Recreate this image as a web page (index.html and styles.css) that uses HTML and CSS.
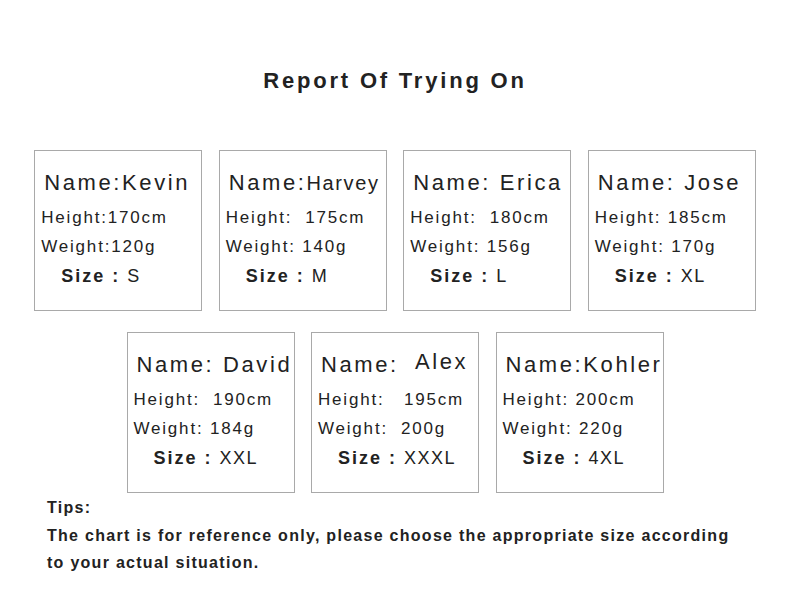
FILE: index.html
```html
<!DOCTYPE html>
<html>
<head>
<meta charset="utf-8">
<link rel="stylesheet" href="styles.css">
</head>
<body>
<div class="page">
  <h1 class="title">Report Of Trying On</h1>
  <div class="row">
    <div class="card">
      <div class="name">Name:Kevin</div>
      <div class="info">Height:170cm</div>
      <div class="info">Weight:120g</div>
      <div class="size"><b>Size : </b>S</div>
    </div>
    <div class="card">
      <div class="name">Name:<span class="small">Harvey</span></div>
      <div class="info">Height:  175cm</div>
      <div class="info">Weight: 140g</div>
      <div class="size"><b>Size : </b>M</div>
    </div>
    <div class="card">
      <div class="name">Name: Erica</div>
      <div class="info">Height:  180cm</div>
      <div class="info">Weight: 156g</div>
      <div class="size"><b>Size : </b>L</div>
    </div>
    <div class="card">
      <div class="name">Name: Jose</div>
      <div class="info">Height: 185cm</div>
      <div class="info">Weight: 170g</div>
      <div class="size"><b>Size : </b>XL</div>
    </div>
  </div>
  <div class="row row2">
    <div class="card">
      <div class="name">Name: David</div>
      <div class="info">Height:  190cm</div>
      <div class="info">Weight: 184g</div>
      <div class="size"><b>Size : </b>XXL</div>
    </div>
    <div class="card">
      <div class="name">Name:  <span class="up">Alex</span></div>
      <div class="info">Height:   195cm</div>
      <div class="info">Weight:  200g</div>
      <div class="size"><b>Size : </b>XXXL</div>
    </div>
    <div class="card">
      <div class="name">Name:Kohler</div>
      <div class="info">Height: 200cm</div>
      <div class="info">Weight: 220g</div>
      <div class="size"><b>Size : </b>4XL</div>
    </div>
  </div>
  <div class="tips">
    <p>Tips:</p>
    <p>The chart is for reference only, please choose the appropriate size according</p>
    <p>to your actual situation.</p>
  </div>
</div>
</body>
</html>
```

FILE: styles.css
```css
html, body {
  margin: 0;
  padding: 0;
  background: #ffffff;
}
body {
  font-family: "Liberation Sans", Arial, sans-serif;
  color: #222222;
}
.page {
  width: 790px;
  padding-top: 66px;
}
.title {
  margin: 0;
  font-size: 22px;
  line-height: 30px;
  font-weight: bold;
  letter-spacing: 2.8px;
  text-align: center;
  color: #222222;
}
.row {
  display: flex;
  justify-content: center;
  gap: 16.5px;
  margin-top: 54px;
}
.row2 {
  margin-top: 21px;
}
.card {
  box-sizing: border-box;
  width: 168px;
  height: 161px;
  border: 1px solid #a9a9a9;
  padding-top: 18px;
  overflow: hidden;
}
.name, .info, .size {
  white-space: pre;
}
.name {
  font-size: 22px;
  line-height: 28px;
  letter-spacing: 2.6px;
  padding-left: 9px;
  margin-bottom: 6px;
}
.small {
  font-size: 20px;
  letter-spacing: 1.6px;
}
.up {
  position: relative;
  top: -3px;
}
.info {
  font-size: 17px;
  line-height: 29px;
  letter-spacing: 1.8px;
  padding-left: 6px;
}
.size {
  font-size: 18px;
  line-height: 31px;
  letter-spacing: 1.5px;
  padding-left: 26px;
}
.size b {
  font-size: 18px;
  letter-spacing: 2px;
}
.tips {
  margin-top: 1px;
  padding-left: 47px;
}
.tips p {
  margin: 0;
  font-size: 16px;
  line-height: 27.5px;
  font-weight: bold;
  letter-spacing: 1.28px;
}
```
